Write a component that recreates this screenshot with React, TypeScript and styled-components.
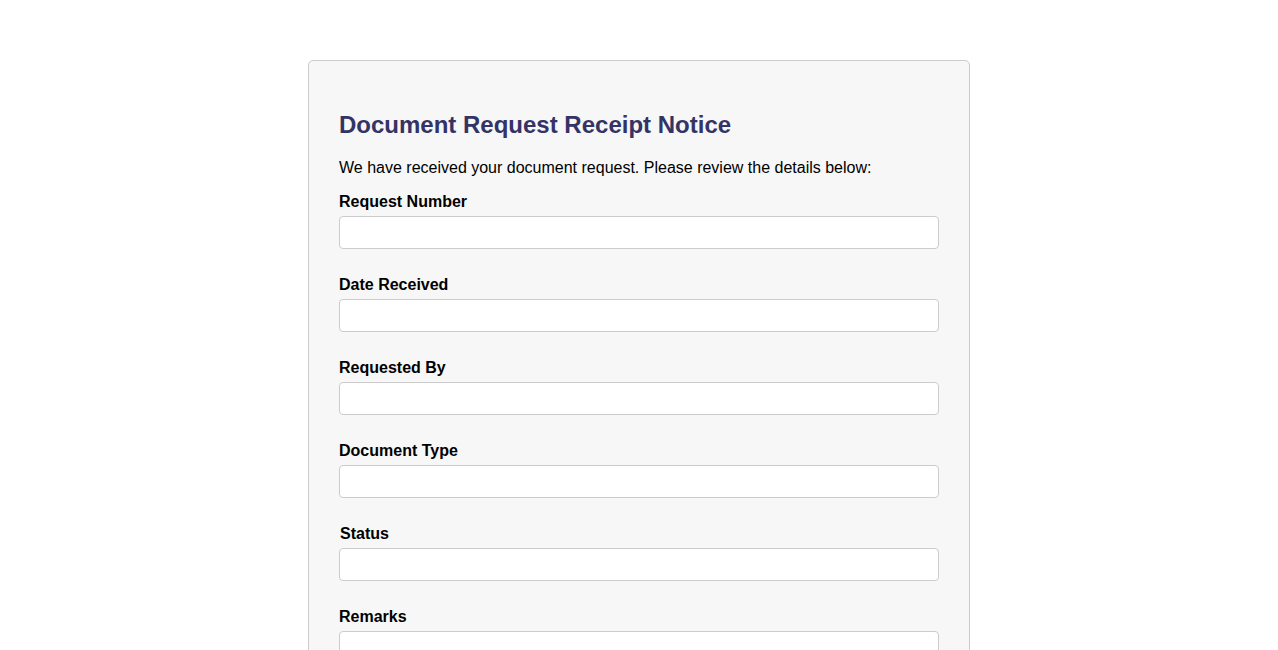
import React from "react";
import styled, { createGlobalStyle } from "styled-components";

const GlobalStyle = createGlobalStyle`
  html, body {
    margin: 0;
    padding: 0;
    background: #ffffff;
    font-family: "Liberation Sans", Arial, sans-serif;
    color: #000;
  }
`;

const Page = styled.div`
  padding-top: 60px;
  display: flex;
  justify-content: center;
`;

const Card = styled.div`
  width: 600px;
  padding: 30px;
  background: #f7f7f7;
  border: 1px solid #cccccc;
  border-radius: 5px;
`;

const Title = styled.h2`
  margin: 20px 0 21px;
  font-size: 24px;
  line-height: 27px;
  font-weight: bold;
  color: #333366;
`;

const Intro = styled.p`
  margin: 0 0 16px;
  font-size: 16px;
  line-height: 18px;
`;

const Field = styled.div`
  display: flex;
  flex-direction: column;
  margin-bottom: 27px;
`;

const Label = styled.label<{ $nudge?: number }>`
  display: block;
  font-size: 16px;
  line-height: 18px;
  font-weight: bold;
  margin-bottom: 5px;
  padding-left: ${(p) => p.$nudge ?? 0}px;
`;

const Input = styled.input`
  box-sizing: border-box;
  width: 100%;
  height: 33px;
  padding: 8px;
  font-size: 14px;
  font-family: "Liberation Sans", Arial, sans-serif;
  background: #ffffff;
  border: 1px solid #cccccc;
  border-radius: 4px;
  outline: none;
`;

const fields = [
  { id: "req", label: "Request Number" },
  { id: "date", label: "Date Received" },
  { id: "by", label: "Requested By" },
  { id: "type", label: "Document Type" },
  { id: "status", label: "Status", nudge: 1 },
  { id: "remarks", label: "Remarks" },
];

export default function App() {
  return (
    <>
      <GlobalStyle />
      <Page>
        <Card>
          <Title>Document Request Receipt Notice</Title>
          <Intro>We have received your document request. Please review the details below:</Intro>
          {fields.map((f) => (
            <Field key={f.id}>
              <Label htmlFor={f.id} $nudge={f.nudge}>
                {f.label}
              </Label>
              <Input id={f.id} type="text" />
            </Field>
          ))}
        </Card>
      </Page>
    </>
  );
}
